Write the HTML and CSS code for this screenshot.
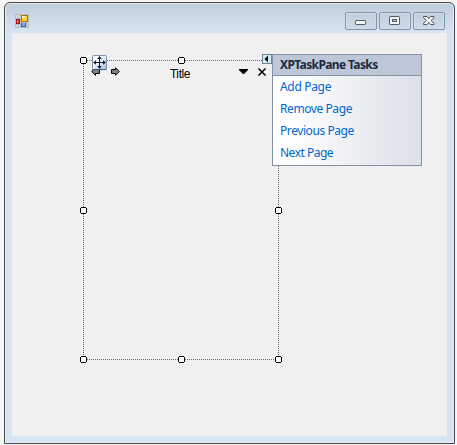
FILE: index.html
```
<!DOCTYPE html>
<html lang="en">
<head>
<meta charset="utf-8">
<title>XPTaskPane designer</title>
<link rel="stylesheet" href="styles.css">
</head>
<body>
<div class="window">
  <header class="titlebar">
    <svg class="app-icon" width="14" height="14" viewBox="0 0 14 14" shape-rendering="crispEdges">
      <path fill="#b9bcc0" d="M0 0h14v14H0z"/>
      <path fill="#cdd5de" d="M1 1h4v3H1zM1 11h2v2H1zM4 11h1v2H4zM12 9h1v4h-1z"/>
      <path fill="#a01818" d="M1 5h4v5H1z"/><path fill="#e04a40" d="M2 6h2v3H2z"/><path fill="#ff9a90" d="M2 7h1v1H2z"/>
      <path fill="#a87808" d="M6 1h7v7H6z"/><path fill="#ffd02c" d="M7 2h5v5H7z"/><path fill="#fff0a0" d="M7 2h3v2H7z"/>
      <path fill="#2b62c4" d="M6 9h5v4H6z"/><path fill="#78a8f8" d="M7 9h3v3H7z"/>
    </svg>
    <div class="buttons">
      <span class="btn"><svg width="12" height="10" viewBox="0 0 12 10"><rect x=".5" y="4.5" width="10" height="4" rx=".7" fill="#f6f6f6" stroke="#535666"/></svg></span>
      <span class="btn"><svg width="12" height="10" viewBox="0 0 12 10"><rect x=".5" y=".5" width="10" height="8" rx=".7" fill="#f4f4f4" stroke="#535666"/><rect x="3.5" y="3.5" width="4" height="2" fill="#b9cce0" stroke="#535666"/></svg></span>
      <span class="btn"><svg width="12" height="10" viewBox="0 0 12 10"><path d="M.5 .5H4L5.75 2.6 7.5 .5H11V1.7L8 4.5l3 2.8V8.5H7.5L5.75 6.4 4 8.5H.5V7.3L3.5 4.5l-3-2.8z" fill="#f4f4f4" stroke="#535666" stroke-linejoin="round"/></svg></span>
    </div>
  </header>
  <main class="client">
    <section class="control">
      <svg class="outline" width="202" height="306" viewBox="0 0 202 306" shape-rendering="crispEdges">
        <g stroke="#666" stroke-dasharray="1 1" fill="none">
          <path d="M3 3.5H199M3 302.5H199M3.5 3V303M198.5 3V303"/>
        </g>
        <defs><g id="handle"><path fill="#000" d="M1 0h5v1h1v5H6v1H1V6H0V1h1z"/><path fill="#fff" d="M1 1h5v5H1z"/></g></defs>
        <use href="#handle"/><use href="#handle" x="98"/>
        <use href="#handle" y="150"/><use href="#handle" x="195" y="150"/>
        <use href="#handle" y="299"/><use href="#handle" x="98" y="299"/><use href="#handle" x="195" y="299"/>
      </svg>
      <div class="pane-bar">
        <svg class="arrows" width="30" height="9" viewBox="0 0 30 9"><g fill="#808080" stroke="#000"><path d="M.7 4.5L4.5 .7V2.5H8.5V6.5H4.5V8.3z"/><path d="M28.3 4.5L24.5 .7V2.5H20.5V6.5H24.5V8.3z"/></g></svg>
        <span class="title">Title</span>
        <svg class="tools" width="28" height="8" viewBox="0 0 28 8"><path d="M0 1h9v1L5 6H4L0 2z"/><path d="M19.5 .5l7 7M26.5 .5l-7 7" stroke="#000" stroke-width="1.5"/></svg>
      </div>
      <svg class="move" width="15" height="15" viewBox="0 0 15 15">
        <defs><linearGradient id="g" x2="1" y2="1"><stop offset=".3" stop-color="#fff"/><stop offset="1" stop-color="#a6bce0"/></linearGradient></defs>
        <rect x=".5" y=".5" width="14" height="14" rx="1" fill="url(#g)" stroke="#7f93b0"/>
        <path d="M.5 14.5h14" stroke="#3a5888"/>
        <path d="M7.5 2v11M2 7.5h11" stroke="#142038"/>
        <path fill="#142038" d="M7.5 1l2.3 3H5.2zM7.5 14l2.3-3H5.2zM1 7.5l3-2.3v4.6zM14 7.5l-3-2.3v4.6z"/>
      </svg>
      <svg class="tag" width="10" height="10" viewBox="0 0 10 10"><rect x=".5" y=".5" width="9" height="9" fill="#d5ebf5" stroke="#6b8593"/><path d="M6 1.5v7L2.5 5z"/></svg>
    </section>
    <aside class="tasks">
      <h1>XPTaskPane Tasks</h1>
      <ul>
        <li><a class="add">Add Page</a></li>
        <li><a class="remove">Remove Page</a></li>
        <li><a class="previous">Previous Page</a></li>
        <li><a class="next">Next Page</a></li>
      </ul>
    </aside>
  </main>
</div>
</body>
</html>
```

FILE: styles.css
```
* { box-sizing: border-box; }
body {
  margin: 0;
  padding: 2px 2px 1px 4px;
  height: 445px;
  background: #f6f6f6;
  font-family: "Noto Sans", "Open Sans", sans-serif;
  overflow: hidden;
}
svg { display: block; }
.window {
  width: 451px;
  height: 442px;
  border: 1px solid #494949;
  border-radius: 6px 6px 0 0;
  padding: 0 7px 7px;
  background: linear-gradient(#bfcddb, #d7e4f1 30px);
  box-shadow: inset 0 0 0 1px #e5edf5;
}
.titlebar {
  height: 30px;
  display: flex;
  justify-content: space-between;
  padding: 9px 2px 0 3px;
}
.app-icon { margin-top: 2px; }
.buttons { display: flex; gap: 2px; }
.btn {
  width: 32px;
  height: 18px;
  display: flex;
  align-items: center;
  justify-content: center;
  border: 1px solid #8293aa;
  border-radius: 2px;
  background: linear-gradient(#c1cedc, #cddae8);
  box-shadow: inset 0 0 0 1px #d3deea;
}
.client {
  width: 435px;
  height: 403px;
  padding: 21px 0 0 68px;
  display: flex;
  align-items: flex-start;
  background: #f0f0f0;
}
.control {
  position: relative;
  width: 192px;
  height: 309px;
  flex: none;
}
.outline { position: absolute; left: 0; top: 3px; }
.pane-bar {
  position: absolute;
  left: 11px;
  top: 12px;
  width: 176px;
  height: 16px;
  display: flex;
  justify-content: space-between;
}
.arrows { margin-top: 1px; }
.title {
  font: 12px/15px "Liberation Sans", sans-serif;
  letter-spacing: -0.4px;
  margin-top: 1px;
}
.tools { margin-top: 2px; }
.move { position: absolute; left: 12px; top: 1px; }
.tag { position: absolute; left: 182px; top: 0; }
.tasks {
  position: relative;
  width: 150px;
  height: 112px;
  border: 1px solid #8492a8;
  background: linear-gradient(90deg, #fff 10%, #dbdfe7);
}
.tasks h1 {
  margin: 0;
  height: 21px;
  padding-left: 7px;
  border-bottom: 1px solid #8492a8;
  background: #bcc7d8;
  color: #1b293e;
  font-size: 12px;
  line-height: 20px;
  font-weight: 700;
  letter-spacing: -0.62px;
  white-space: nowrap;
}
.tasks ul {
  list-style: none;
  margin: 0;
  padding: 0 0 0 7px;
}
.tasks li {
  height: 22px;
  font-size: 12px;
  line-height: 22px;
  color: #0066cc;
  white-space: nowrap;
}
.add { letter-spacing: -0.32px; }
.remove { letter-spacing: -0.42px; }
.previous { letter-spacing: -0.42px; }
.next { letter-spacing: -0.5px; }
```
